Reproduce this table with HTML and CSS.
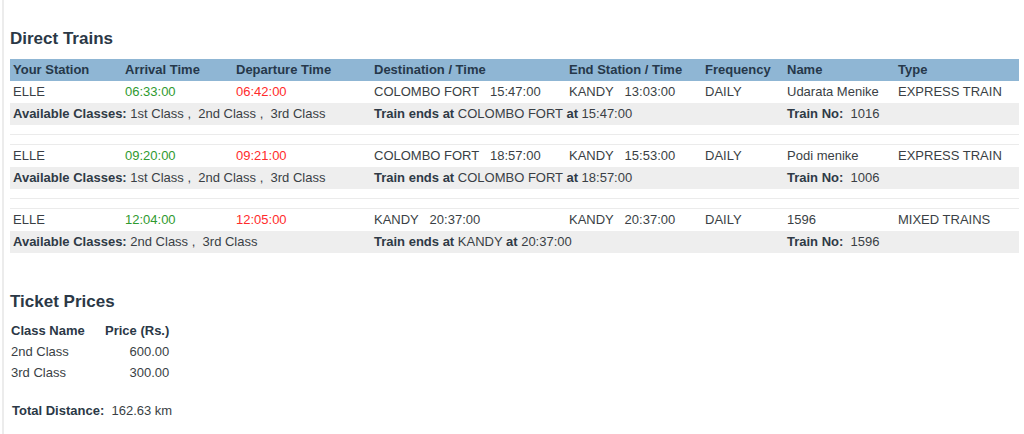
FILE: index.html
```html
<!DOCTYPE html>
<html>
<head>
<meta charset="utf-8">
<link rel="stylesheet" href="styles.css">
</head>
<body>
<div class="page">
  <h2 class="title first">Direct Trains</h2>
  <table class="trains">
    <colgroup>
      <col class="c1"><col class="c2"><col class="c3"><col class="c4"><col class="c5"><col class="c6"><col class="c7"><col class="c8">
    </colgroup>
    <thead>
      <tr class="head">
        <th>Your Station</th><th>Arrival Time</th><th>Departure Time</th><th>Destination / Time</th><th>End Station / Time</th><th>Frequency</th><th>Name</th><th>Type</th>
      </tr>
    </thead>
    <tbody>
      <tr class="data">
        <td>ELLE</td><td class="arr">06:33:00</td><td class="dep">06:42:00</td><td>COLOMBO FORT&nbsp;&nbsp;&nbsp;15:47:00</td><td>KANDY&nbsp;&nbsp;&nbsp;13:03:00</td><td>DAILY</td><td>Udarata Menike</td><td>EXPRESS TRAIN</td>
      </tr>
      <tr class="info">
        <td colspan="3"><b>Available Classes:</b> 1st Class ,&nbsp; 2nd Class ,&nbsp; 3rd Class</td><td colspan="3"><b>Train ends at</b> COLOMBO FORT <b>at</b> 15:47:00</td><td colspan="2"><b>Train No:</b>&nbsp; 1016</td>
      </tr>
      <tr class="sep"><td colspan="8"></td></tr>
      <tr class="sep"><td colspan="8"></td></tr>
      <tr class="data">
        <td>ELLE</td><td class="arr">09:20:00</td><td class="dep">09:21:00</td><td>COLOMBO FORT&nbsp;&nbsp;&nbsp;18:57:00</td><td>KANDY&nbsp;&nbsp;&nbsp;15:53:00</td><td>DAILY</td><td>Podi menike</td><td>EXPRESS TRAIN</td>
      </tr>
      <tr class="info">
        <td colspan="3"><b>Available Classes:</b> 1st Class ,&nbsp; 2nd Class ,&nbsp; 3rd Class</td><td colspan="3"><b>Train ends at</b> COLOMBO FORT <b>at</b> 18:57:00</td><td colspan="2"><b>Train No:</b>&nbsp; 1006</td>
      </tr>
      <tr class="sep"><td colspan="8"></td></tr>
      <tr class="sep"><td colspan="8"></td></tr>
      <tr class="data">
        <td>ELLE</td><td class="arr">12:04:00</td><td class="dep">12:05:00</td><td>KANDY&nbsp;&nbsp;&nbsp;20:37:00</td><td>KANDY&nbsp;&nbsp;&nbsp;20:37:00</td><td>DAILY</td><td>1596</td><td>MIXED TRAINS</td>
      </tr>
      <tr class="info">
        <td colspan="3"><b>Available Classes:</b> 2nd Class ,&nbsp; 3rd Class</td><td colspan="3"><b>Train ends at</b> KANDY <b>at</b> 20:37:00</td><td colspan="2"><b>Train No:</b>&nbsp; 1596</td>
      </tr>
    </tbody>
  </table>

  <h2 class="title second">Ticket Prices</h2>
  <table class="prices">
    <tr><th class="pn">Class Name</th><th class="pp">Price (Rs.)</th></tr>
    <tr><td class="pn">2nd Class</td><td class="pp">600.00</td></tr>
    <tr><td class="pn">3rd Class</td><td class="pp">300.00</td></tr>
  </table>
  <p class="distance"><b>Total Distance:</b>&nbsp; 162.63 km</p>
</div>
</body>
</html>
```

FILE: styles.css
```css
html, body {
  margin: 0;
  padding: 0;
  background: #ffffff;
}
body {
  font-family: "Liberation Sans", Arial, sans-serif;
  font-size: 13px;
  color: #3a3f45;
}
.page {
  margin-left: 2px;
  border-left: 2px solid #ececec;
  padding: 0 5px 0 6px;
  min-height: 434px;
  box-sizing: border-box;
  overflow: hidden;
}
.title {
  font-size: 17px;
  font-weight: bold;
  color: #2b3846;
  line-height: 20px;
  margin: 0;
}
.title.first {
  padding-top: 29px;
  margin-bottom: 10px;
}
.title.second {
  margin-top: 39px;
  margin-bottom: 8px;
}
.trains {
  width: 1009px;
  border-collapse: collapse;
  table-layout: fixed;
}
.c1 { width: 112px; }
.c2 { width: 111px; }
.c3 { width: 138px; }
.c4 { width: 195px; }
.c5 { width: 136px; }
.c6 { width: 82px; }
.c7 { width: 111px; }
.c8 { width: 124px; }
.trains th, .trains td {
  padding: 0 0 0 3px;
  text-align: left;
  white-space: nowrap;
  overflow: hidden;
}
.trains th {
  background: #8fb6d4;
  color: #26384a;
  font-weight: bold;
  height: 22px;
  line-height: 22px;
}
.data td {
  height: 22px;
  line-height: 22px;
}
.info td {
  background: #eeeeee;
  height: 22px;
  line-height: 22px;
}
.info b { color: #2f3a46; }
.arr { color: #2f9a2f; }
.dep { color: #ff2b2b; }
.sep td {
  height: 9px;
  padding: 0;
  border-bottom: 1px solid #ebebeb;
}
.prices {
  border-collapse: collapse;
  margin-left: 1px;
}
.prices th, .prices td {
  height: 21px;
  line-height: 21px;
  padding: 0;
}
.prices th {
  font-weight: bold;
  color: #2b3846;
  text-align: left;
}
.prices .pn {
  width: 94px;
  text-align: left;
}
.prices .pp {
  text-align: right;
}
.distance {
  margin: 18px 0 0 2px;
  line-height: 20px;
}
.distance b { color: #2b3846; }
```
